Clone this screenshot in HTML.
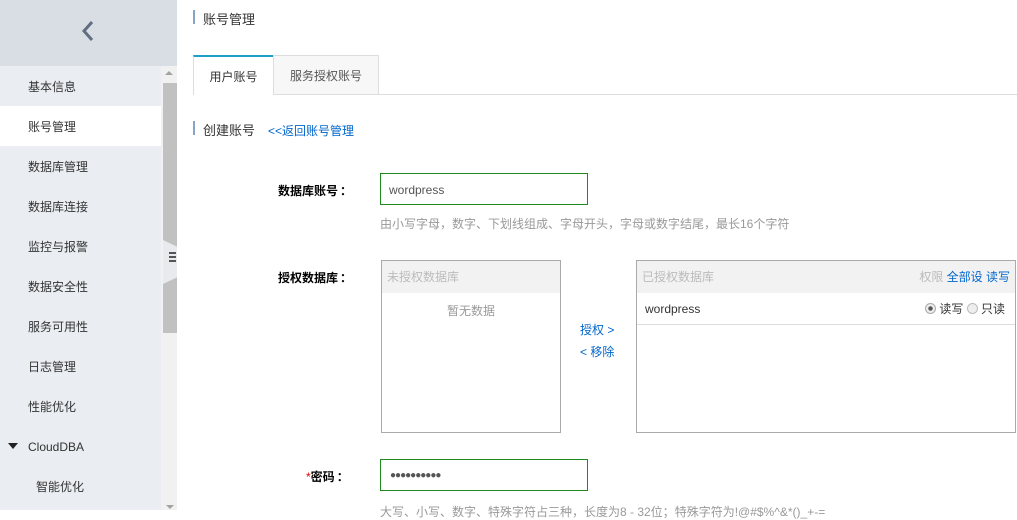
<!DOCTYPE html><html><head><meta charset="utf-8"><style>
*{margin:0;padding:0;box-sizing:border-box}
body{width:1017px;height:510px;overflow:hidden;background:#fff;font-family:"Liberation Sans","Noto Sans CJK SC",sans-serif;font-size:12px;color:#333;position:relative}
.a{position:absolute}
.side{left:0;top:0;width:161px;height:510px;background:#eaedf1}
.head{left:0;top:0;width:177px;height:66px;background:#d9dee4}
.item{position:absolute;left:0;width:161px;height:40px;line-height:42px;padding-left:28px;font-size:12px;color:#333}
.blue{color:#06c}
.lbl{font-weight:bold;color:#000;font-size:12px}
.c{font-family:"Noto Sans CJK SC",sans-serif;margin-left:2px}
</style></head><body>
<div class="a side"></div>
<div class="a head"></div>
<svg class="a" style="left:80px;top:20px" width="16" height="22"><path d="M12 2 L4 11 L12 20" stroke="#5f6f80" stroke-width="3" fill="none"/></svg>
<div class="item" style="top:66px">基本信息</div>
<div class="item" style="top:106px;background:#fff">账号管理</div>
<div class="item" style="top:146px">数据库管理</div>
<div class="item" style="top:186px">数据库连接</div>
<div class="item" style="top:226px">监控与报警</div>
<div class="item" style="top:266px">数据安全性</div>
<div class="item" style="top:306px">服务可用性</div>
<div class="item" style="top:346px">日志管理</div>
<div class="item" style="top:386px">性能优化</div>
<div class="item" style="top:426px">CloudDBA</div>
<div class="a" style="left:8px;top:443px;width:0;height:0;border-left:5px solid transparent;border-right:5px solid transparent;border-top:6px solid #222"></div>
<div class="item" style="top:466px;padding-left:36px">智能优化</div>
<div class="a" style="left:161px;top:66px;width:16px;height:444px;background:#f1f1f1"></div>
<div class="a" style="left:165px;top:71px;width:0;height:0;border-left:4px solid transparent;border-right:4px solid transparent;border-bottom:4px solid #a3a3a3"></div>
<div class="a" style="left:163px;top:83px;width:14px;height:250px;background:#c1c1c1"></div>
<div class="a" style="left:163px;top:240px;width:14px;height:44px;background:#e8eaed;clip-path:polygon(0 0,100% 15%,100% 85%,0 100%)"></div>
<div class="a" style="left:169px;top:252px;width:7px;height:10px;border-top:2px solid #555;border-bottom:2px solid #555"></div>
<div class="a" style="left:169px;top:256px;width:7px;height:2px;background:#555"></div>
<div class="a" style="left:166px;top:505px;width:0;height:0;border-left:4px solid transparent;border-right:4px solid transparent;border-top:4px solid #a3a3a3"></div>

<div class="a" style="left:193px;top:10px;width:2px;height:14px;background:#88a4c4"></div>
<div class="a" style="left:203px;top:9px;font-size:13px">账号管理</div>
<div class="a" style="left:193px;top:94px;width:824px;height:1px;background:#ddd"></div>
<div class="a" style="left:193px;top:55px;width:80px;height:40px;background:#fff;border-top:2px solid #1e9fc8;border-left:1px solid #ddd;text-align:center;line-height:40px">用户账号</div>
<div class="a" style="left:273px;top:55px;width:106px;height:40px;background:#f7f7f7;border:1px solid #ddd;text-align:center;line-height:40px;color:#555">服务授权账号</div>
<div class="a" style="left:193px;top:121px;width:2px;height:14px;background:#88a4c4"></div>
<div class="a" style="left:203px;top:120px;font-size:13px">创建账号</div>
<div class="a blue" style="left:268px;top:122px">&lt;&lt;返回账号管理</div>

<div class="a lbl" style="left:278px;top:182px">数据库账号<span class="c">：</span></div>
<div class="a" style="left:380px;top:173px;width:208px;height:32px;border:1px solid #1e8a1e;padding-left:8px;line-height:32px;color:#555">wordpress</div>
<div class="a" style="left:380px;top:215px;color:#999">由小写字母，数字、下划线组成、字母开头，字母或数字结尾，最长16个字符</div>

<div class="a lbl" style="left:278px;top:269px">授权数据库<span class="c">：</span></div>
<div class="a" style="left:381px;top:260px;width:180px;height:173px;border:1px solid #aaa">
<div style="height:32px;background:#f2f2f2;line-height:33px;padding-left:5px;color:#bbb">未授权数据库</div>
<div style="text-align:center;color:#999;margin-top:9px">暂无数据</div></div>
<div class="a blue" style="left:580px;top:321px">授权 &gt;</div>
<div class="a blue" style="left:580px;top:343px">&lt; 移除</div>
<div class="a" style="left:636px;top:260px;width:380px;height:173px;border:1px solid #aaa">
<div style="height:32px;background:#f2f2f2;line-height:33px;padding:0 5px;color:#bbb;position:relative">已授权数据库<span style="position:absolute;right:5px;color:#bbb">权限 <span class="blue">全部设 读写</span></span></div>
<div style="height:32px;line-height:33px;padding:0 8px;border-bottom:1px solid #ddd;position:relative">wordpress<span style="position:absolute;right:10px;top:0">
<span style="display:inline-block;width:11px;height:11px;border-radius:50%;border:1px solid #aaa;background:radial-gradient(#555 30%,#eee 40%);vertical-align:-1px"></span> 读写
<span style="display:inline-block;width:11px;height:11px;border-radius:50%;border:1px solid #bbb;background:#eee;vertical-align:-1px"></span> 只读</span></div></div>

<div class="a lbl" style="left:306px;top:468px"><span style="color:#e00;font-weight:normal">*</span>密码<span class="c">：</span></div>
<div class="a" style="left:380px;top:459px;width:208px;height:32px;border:1px solid #1e8a1e;padding-left:9px;line-height:31px;color:#555;font-size:10px;letter-spacing:-1px">●●●●●●●●●●</div>
<div class="a" style="left:380px;top:503px;color:#999">大写、小写、数字、特殊字符占三种，长度为8 - 32位；特殊字符为!@#$%^&amp;*()_+-=</div>
</body></html>
